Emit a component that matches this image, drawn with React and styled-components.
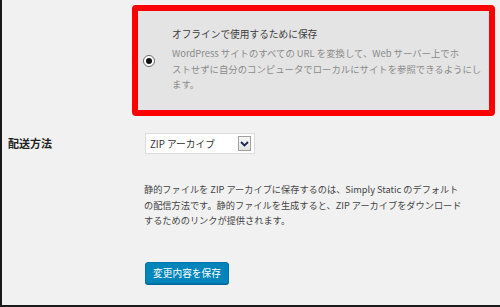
import React from "react";
import styled, { createGlobalStyle } from "styled-components";

const GlobalStyle = createGlobalStyle`
  html, body {
    margin: 0;
    padding: 0;
    background: #f1f1f1;
  }
  * {
    box-sizing: border-box;
  }
`;

const label_col_width = 132;

const Page = styled.div`
  width: 500px;
  height: 307px;
  overflow: hidden;
  background: #f1f1f1;
  border-left: 2px solid #1a1a1a;
  border-bottom: 2px solid #1a1a1a;
  font-family: "Noto Sans CJK JP", "Noto Sans", sans-serif;
  font-size: 9.7px;
  color: #444;
  display: grid;
  grid-template-columns: ${label_col_width - 2}px 1fr;
  align-content: start;
`;

const Label = styled.div`
  padding-left: 6px;
  font-weight: bold;
  font-size: 11px;
  color: #222;
  line-height: 21px;
  margin-top: 17px;
`;

const Highlight = styled.div`
  margin-top: 5px;
  width: 363px;
  height: 111px;
  border: 6px solid #ff0000;
  border-radius: 4px;
  background: #e4e4e4;
  display: flex;
  align-items: center;
  padding: 0 4px 2px 5px;
  overflow: hidden;
`;

const Radio = styled.span`
  flex: 0 0 auto;
  width: 12px;
  height: 12px;
  border-radius: 50%;
  border: 1px solid #6a6a6a;
  background: #fff;
  display: flex;
  align-items: center;
  justify-content: center;
  margin-right: 17px;
  margin-top: 2px;

  &::after {
    content: "";
    width: 6px;
    height: 6px;
    border-radius: 50%;
    background: #111;
  }
`;

const OptionText = styled.div`
  display: flex;
  flex-direction: column;
  white-space: nowrap;
`;

const OptionTitle = styled.div`
  color: #3c3c3c;
  line-height: 16px;
  margin-bottom: 4px;
`;

const OptionDesc = styled.div`
  color: #8a8a8a;
  font-size: 9.4px;
  line-height: 15.5px;
`;

const Field = styled.div`
  padding-left: 13px;
  margin-top: 17px;
`;

const Select = styled.div`
  width: 110px;
  height: 21px;
  background: #fff;
  border: 1px solid #dcdcdc;
  display: flex;
  align-items: center;
  justify-content: space-between;
  padding: 0 3px 0 4px;
  color: #333;
`;

const SelectArrow = styled.span`
  width: 13px;
  height: 15px;
  border: 1px solid #a0a0a0;
  background: linear-gradient(#f7f7f7, #e2e2e2);
  display: flex;
  align-items: center;
  justify-content: center;
`;

const Help = styled.p`
  margin: 28px 0 0 -1px;
  font-size: 9.2px;
  line-height: 15.5px;
  color: #444;
  white-space: nowrap;
`;

const SaveButton = styled.button`
  margin-top: 33px;
  width: 84px;
  height: 22px;
  padding: 0;
  border: 1px solid #0073aa;
  border-radius: 3px;
  background: #0085ba;
  box-shadow: 0 1px 0 #006799;
  color: #fff;
  font-family: inherit;
  font-size: 9.7px;
  line-height: 20px;
`;

function App() {
  return (
    <>
      <GlobalStyle />
      <Page>
        <div />
        <Highlight>
          <Radio />
          <OptionText>
            <OptionTitle>オフラインで使用するために保存</OptionTitle>
            <OptionDesc>
              WordPress サイトのすべての URL を変換して、Web サーバー上でホ
              <br />
              ストせずに自分のコンピュータでローカルにサイトを参照できるようにし
              <br />
              ます。
            </OptionDesc>
          </OptionText>
        </Highlight>

        <Label>配送方法</Label>
        <Field>
          <Select>
            <span>ZIP アーカイブ</span>
            <SelectArrow>
              <svg width="9" height="6" viewBox="0 0 9 6">
                <path d="M1 1 L4.5 4.5 L8 1" fill="none" stroke="#1c2750" strokeWidth="1.8" />
              </svg>
            </SelectArrow>
          </Select>
          <Help>
            静的ファイルを ZIP アーカイブに保存するのは、Simply Static のデフォルト
            <br />
            の配信方法です。静的ファイルを生成すると、ZIP アーカイブをダウンロード
            <br />
            するためのリンクが提供されます。
          </Help>
          <SaveButton>変更内容を保存</SaveButton>
        </Field>
      </Page>
    </>
  );
}

export default App;
